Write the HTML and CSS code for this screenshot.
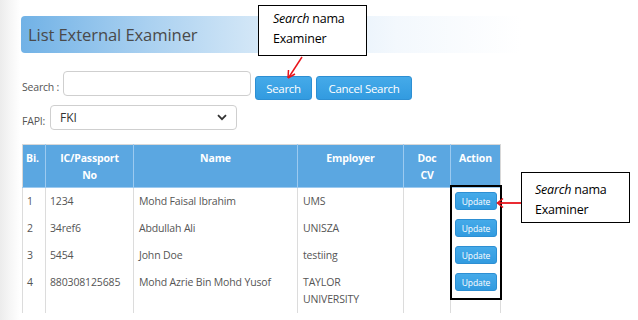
FILE: index.html
```html
<!DOCTYPE html>
<html>
<head>
<meta charset="utf-8">
<link rel="stylesheet" href="styles.css">
</head>
<body>
<div class="page">
  <div class="title-bar"><h1>List External Examiner</h1></div>

  <div class="search-row">
    <label class="lbl">Search :</label>
    <input class="txt" type="text">
    <button class="btn btn-search">Search</button>
    <button class="btn btn-cancel">Cancel Search</button>
  </div>

  <div class="fapi-row">
    <label class="lbl">FAPI:</label>
    <div class="select">
      <span>FKI</span>
      <svg class="chev" width="10" height="7" viewBox="0 0 10 7"><path d="M1 1.2 L5 5.2 L9 1.2" fill="none" stroke="#333" stroke-width="1.8"/></svg>
    </div>
  </div>

  <table class="grid">
    <colgroup>
      <col class="c-bi"><col class="c-ic"><col class="c-name"><col class="c-emp"><col class="c-doc"><col class="c-act">
    </colgroup>
    <thead>
      <tr><th>Bi.</th><th>IC/Passport<br>No</th><th>Name</th><th>Employer</th><th>Doc<br>CV</th><th>Action</th></tr>
    </thead>
    <tbody>
      <tr><td>1</td><td>1234</td><td>Mohd Faisal Ibrahim</td><td>UMS</td><td></td><td class="act"><button class="upd">Update</button></td></tr>
      <tr><td>2</td><td>34ref6</td><td>Abdullah Ali</td><td>UNISZA</td><td></td><td class="act"><button class="upd">Update</button></td></tr>
      <tr><td>3</td><td>5454</td><td>John Doe</td><td>testiing</td><td></td><td class="act"><button class="upd">Update</button></td></tr>
      <tr><td>4</td><td>880308125685</td><td>Mohd Azrie Bin Mohd Yusof</td><td>TAYLOR<br>UNIVERSITY</td><td></td><td class="act"><button class="upd">Update</button></td></tr>
    </tbody>
  </table>
</div>

<div class="hl-box"></div>

<div class="callout callout-1"><i>Search</i> nama<br>Examiner</div>
<div class="callout callout-2"><i>Search</i> nama<br>Examiner</div>

<svg class="arrow arrow-1" width="30" height="30" viewBox="0 0 30 30">
  <line x1="16" y1="1" x2="3" y2="21" stroke="#e8141b" stroke-width="1.5"/>
  <path d="M2 22 L2.5 14 M2 22 L9 18" stroke="#e8141b" stroke-width="1.5" fill="none"/>
</svg>
<svg class="arrow arrow-2" width="26" height="12" viewBox="0 0 26 12">
  <line x1="25" y1="6" x2="2" y2="6" stroke="#e8141b" stroke-width="1.8"/>
  <path d="M7 1.5 L1.5 6 L7 10.5" stroke="#e8141b" stroke-width="1.6" fill="none"/>
</svg>
</body>
</html>
```

FILE: styles.css
```css
html, body {
  margin: 0;
  padding: 0;
}
body {
  width: 638px;
  height: 320px;
  overflow: hidden;
  position: relative;
  background: linear-gradient(to right, #ececec 0px, #f6f6f6 10px, #ffffff 20px);
  font-family: "Open Sans", "Noto Sans", sans-serif;
  color: #555;
}
.page {
  padding: 16px 0 0 22px;
}
.title-bar {
  margin-left: -1px;
  width: 500px;
  height: 37px;
  border-radius: 4px;
  background: linear-gradient(to right, #71b2e6 0%, #a9d0f0 25%, #d9eaf8 50%, #f3f8fd 75%, rgba(255,255,255,0) 100%);
  display: flex;
  align-items: center;
}
.title-bar h1 {
  margin: 0 0 0 7px;
  font-weight: normal;
  font-size: 16.6px;
  color: #4a4a4a;
  letter-spacing: -0.1px;
}
.search-row {
  display: flex;
  align-items: flex-start;
  margin-top: 18px;
  height: 29px;
}
.lbl {
  font-size: 10.5px;
  color: #555;
  letter-spacing: -0.2px;
}
.search-row .lbl {
  margin-top: 9px;
  width: 41px;
}
.txt {
  width: 188px;
  height: 25px;
  box-sizing: border-box;
  border: 1px solid #cfcfcf;
  border-radius: 4px;
  margin: 0;
  padding: 0 6px;
  background: #fff;
}
.btn {
  margin: 5px 0 0 4px;
  height: 24px;
  box-sizing: border-box;
  border: 1px solid #2d8fd3;
  border-radius: 3px;
  background: linear-gradient(#45aae9, #329be0);
  color: #fff;
  font-family: "Open Sans", sans-serif;
  font-size: 11.5px;
  letter-spacing: -0.3px;
  padding: 0;
}
.btn-search { width: 57px; }
.btn-cancel { width: 96px; }
.fapi-row {
  display: flex;
  align-items: center;
  margin-top: 5px;
}
.fapi-row .lbl {
  width: 28px;
  margin-top: 6px;
}
.select {
  width: 187px;
  height: 25px;
  box-sizing: border-box;
  border: 1px solid #cfcfcf;
  border-radius: 4px;
  background: #fff;
  display: flex;
  align-items: center;
  justify-content: space-between;
  padding: 0 9px 0 9px;
  font-size: 12px;
  color: #333;
}
.chev { display: block; }
.grid {
  margin-top: 14px;
  border-collapse: collapse;
  table-layout: fixed;
  width: 478px;
  font-size: 10.5px;
  letter-spacing: -0.15px;
}
.c-bi { width: 23px; }
.c-ic { width: 88px; }
.c-name { width: 164px; }
.c-emp { width: 106px; }
.c-doc { width: 47px; }
.c-act { width: 50px; }
.grid th {
  background: #5ba7e1;
  color: #fff;
  font-weight: bold;
  vertical-align: top;
  line-height: 17px;
  padding: 5px 3px 3px;
  border: 1px solid #9ccaf0;
  border-top: 1px solid #d8d8d8;
  text-align: center;
}
.grid th:first-child { border-left: 1px solid #d8d8d8; padding-left: 3px; text-align: left; }
.grid th:last-child { border-right: 1px solid #d8d8d8; }
.grid td {
  vertical-align: top;
  line-height: 17px;
  padding: 5px 4px 5px 4px;
  border-left: 1px solid #dcdcdc;
  border-right: 1px solid #dcdcdc;
  color: #555;
  white-space: nowrap;
  overflow: hidden;
}
.grid td:nth-child(3), .grid td:nth-child(4) { padding-left: 5px; }
.grid td.act {
  padding: 4px 0 0 4px;
}
.upd {
  display: block;
  width: 42px;
  height: 18px;
  padding: 0;
  margin: 0;
  border: 1px solid #2d8fd3;
  border-radius: 3px;
  background: linear-gradient(#45aae9, #329be0);
  color: #fff;
  font-family: "Open Sans", sans-serif;
  font-size: 8.5px;
  letter-spacing: -0.1px;
}
.hl-box {
  position: absolute;
  left: 450px;
  top: 185px;
  width: 48px;
  height: 111px;
  border: 2px solid #000;
}
.callout {
  position: absolute;
  background: #fff;
  border: 1px solid #000;
  box-sizing: border-box;
  font-family: "Open Sans", sans-serif;
  font-size: 12.5px;
  line-height: 20px;
  color: #000;
  letter-spacing: -0.2px;
}
.callout-1 {
  left: 258px;
  top: 5px;
  width: 109px;
  height: 51px;
  padding: 3px 0 0 14px;
}
.callout-2 {
  left: 521px;
  top: 172px;
  width: 109px;
  height: 51px;
  padding: 7px 0 0 13px;
}
.arrow { position: absolute; }
.arrow-1 { left: 286px; top: 56px; }
.arrow-2 { left: 496px; top: 197px; }
```
